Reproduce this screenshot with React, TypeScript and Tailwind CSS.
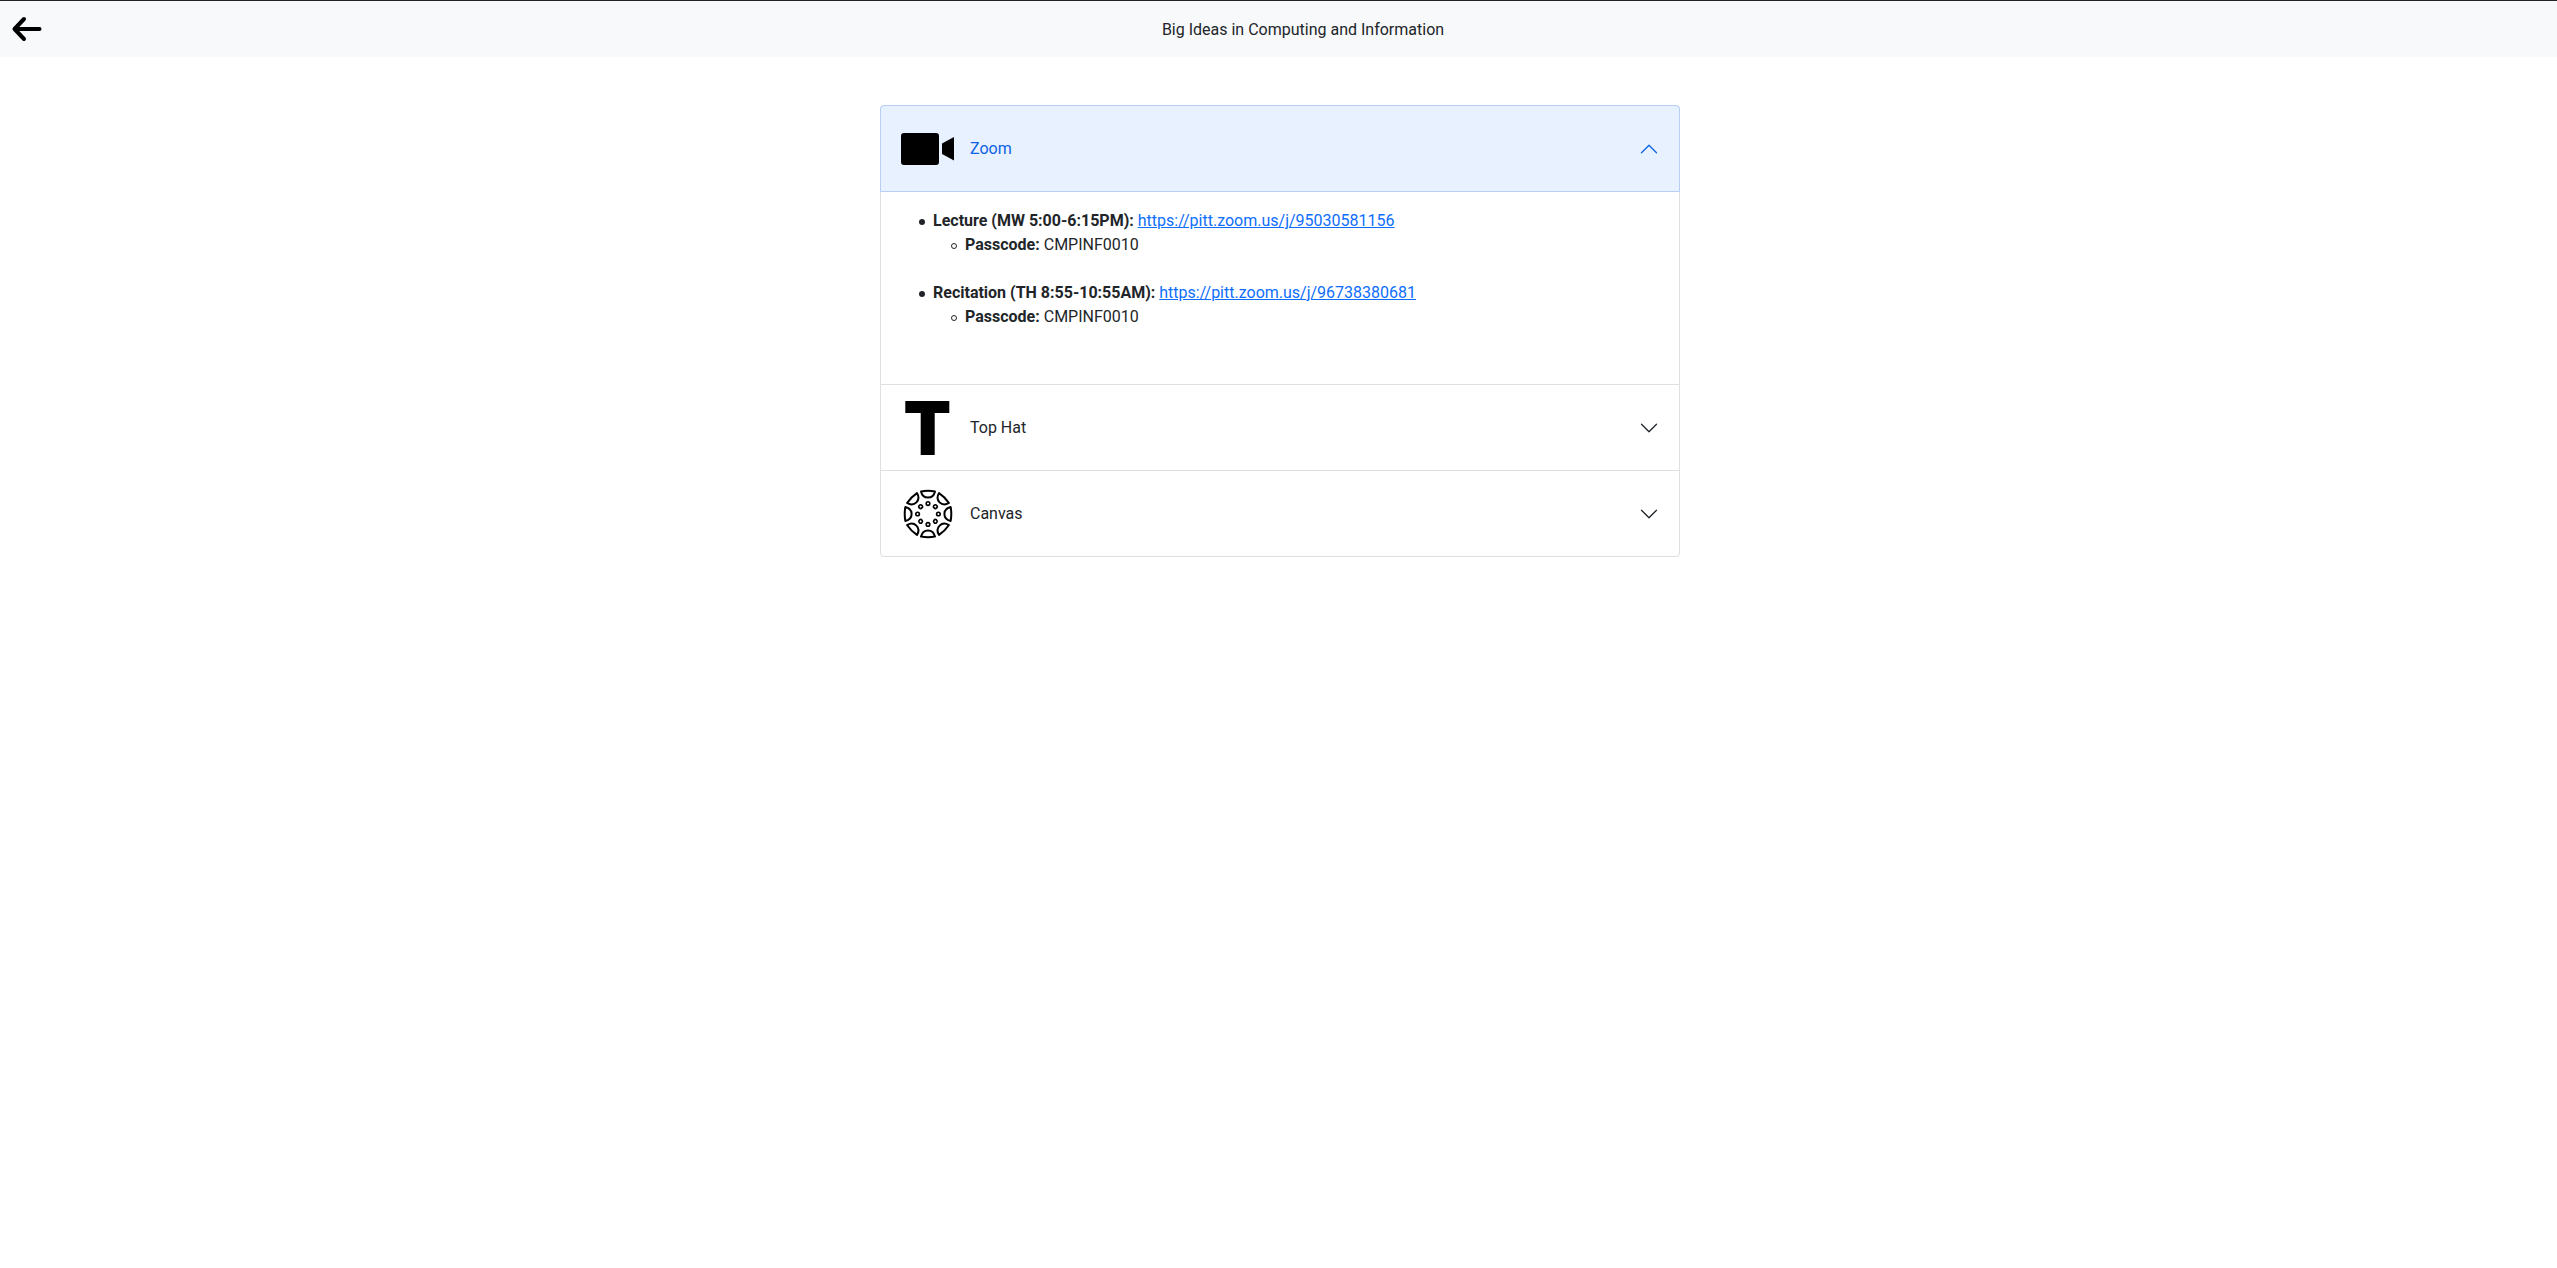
const chevron = "M1.646 4.646a.5.5 0 0 1 .708 0L8 10.293l5.646-5.647a.5.5 0 0 1 .708.708l-6 6a.5.5 0 0 1-.708 0l-6-6a.5.5 0 0 1 0-.708z";

function Chevron({ open }: { open?: boolean }) {
    return (
        <svg viewBox="0 0 16 16" className={open ? "ml-auto h-5 w-5 rotate-180 fill-[#0c63e4]" : "ml-auto h-5 w-5 fill-[#212529]"}>
            <path fillRule="evenodd" d={chevron} />
        </svg>
    );
}

function VideoIcon() {
    return (
        <svg viewBox="0 0 54 54" className="h-[54px] w-[54px] fill-black">
            <rect x="0" y="11" width="38" height="32" rx="3" />
            <path d="M41 21.5L53 15V38.5L41 32Z" />
        </svg>
    );
}

function TopHatIcon() {
    return (
        <svg viewBox="0 0 54 54" className="h-[54px] w-[54px] fill-black">
            <path d="M4.3 0H48.3V12H33.7V54H19.7V12H4.3Z" />
        </svg>
    );
}

function CanvasIcon() {
    const angles = [0, 45, 90, 135, 180, 225, 270, 315];
    return (
        <svg viewBox="-27 -27 54 54" className="h-[54px] w-[54px]">
            {angles.map((a) => (
                <g key={a} transform={`rotate(${a})`} fill="none" stroke="black">
                    <path d="M-7 -22.6 Q0 -24 7 -22.6 Q5.5 -16.4 0 -16.4 Q-5.5 -16.4 -7 -22.6Z" strokeWidth="2" strokeLinejoin="round" />
                    <circle cx="0" cy="-10.4" r="1.8" strokeWidth="1.6" />
                </g>
            ))}
        </svg>
    );
}

function Meeting({ label, href }: { label: string; href: string }) {
    return (
        <li className="relative before:absolute before:left-[-14px] before:top-[9.5px] before:h-[6px] before:w-[6px] before:rounded-full before:bg-[#212529]">
            <b className="font-bold">{label}</b> <a href={href} className="text-[#0d6efd] underline">{href}</a>
            <ul className="pl-8">
                <li className="relative before:absolute before:left-[-14px] before:top-[10px] before:h-[6px] before:w-[6px] before:rounded-full before:border before:border-[#212529]">
                    <b className="font-bold">Passcode:</b> CMPINF0010
                </li>
            </ul>
        </li>
    );
}

export default function App() {
    return (
        <div className="min-h-[1268px] bg-white font-['Roboto',sans-serif] text-base leading-6 text-[#212529]">
            <nav className="flex h-[57px] items-center border-t border-t-[#212529] bg-[#f8f9fa]">
                <button aria-label="Back" className="w-[49px] shrink-0 pl-[10px]">
                    <svg viewBox="0 0 34 34" className="h-[34px] w-[34px] fill-none stroke-black stroke-[4] [stroke-linecap:round] [stroke-linejoin:round]">
                        <path d="M29.5 17H4.5M14 7L4.5 17L14 27" />
                    </svg>
                </button>
                <div className="mt-[2px] flex-1 text-center">Big Ideas in Computing and Information</div>
            </nav>
            <div className="mt-12 flex justify-center pl-[3px]">
                <main className="w-[800px] rounded border border-[#dfdfdf]">
                    <button className="-mx-px -mt-px flex h-[87px] w-[calc(100%+2px)] items-center gap-[15px] rounded-t border border-[#b6cff3] bg-[#e7f1ff] px-5 text-[#0c63e4]">
                        <VideoIcon />
                        <span>Zoom</span>
                        <Chevron open />
                    </button>
                    <div className="h-[192px] px-5 pt-[17px]">
                        <ul className="flex flex-col gap-6 pl-8">
                            <Meeting label="Lecture (MW 5:00-6:15PM):" href="https://pitt.zoom.us/j/95030581156" />
                            <Meeting label="Recitation (TH 8:55-10:55AM):" href="https://pitt.zoom.us/j/96738380681" />
                        </ul>
                    </div>
                    <button className="flex h-[86px] w-full items-center gap-[15px] border-t border-[#dfdfdf] px-5">
                        <TopHatIcon />
                        <span>Top Hat</span>
                        <Chevron />
                    </button>
                    <button className="flex h-[86px] w-full items-center gap-[15px] border-t border-[#dfdfdf] px-5">
                        <CanvasIcon />
                        <span>Canvas</span>
                        <Chevron />
                    </button>
                </main>
            </div>
        </div>
    );
}
